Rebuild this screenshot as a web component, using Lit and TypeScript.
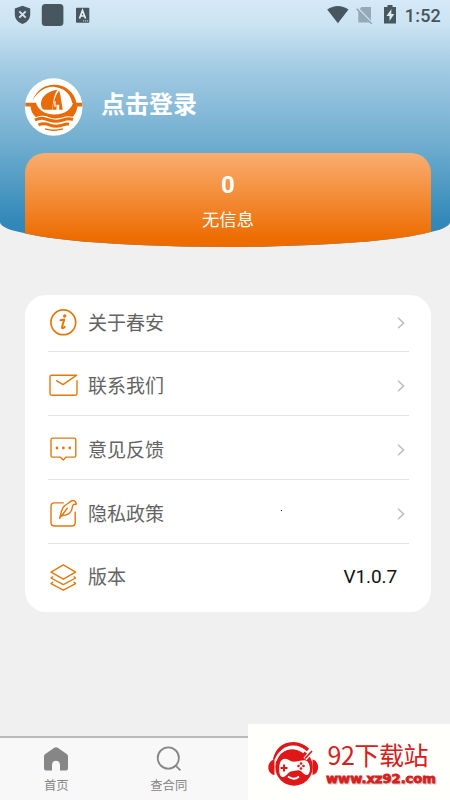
import { LitElement, html, css, svg } from "lit";
import { customElement, property } from "lit/decorators.js";

const icons: Record<string, unknown> = {
  info: svg`<circle cx="15.300" cy="15.300" r="12.400" stroke-width="1.700"/>
    <path d="M12.500 13.300l3.700-.8-2.200 7.800c-.3 1.300 1 1.200 2.700-.4" stroke-width="2"/>
    <circle cx="16.700" cy="9" r="1.700" fill="#e2790f" stroke="none"/>`,
  mail: svg`<path d="M29 10.600v12.900c0 1.100-.6 1.700-1.700 1.700H3.700C2.600 25.200 2 24.600 2 23.500V6.900C2 5.800 2.600 5.200 3.700 5.200H28.700L15 14.600 8.500 10.700"/>`,
  chat: svg`<path d="M4.600 4.100h21.600c1 0 1.600.6 1.600 1.600v15.800c0 1-.6 1.600-1.600 1.600h-8l-3 3-3-3H4.600c-1 0-1.600-.6-1.600-1.600V5.700c0-1 .6-1.600 1.600-1.600z"/>
    <g fill="#e2790f" stroke="none"><circle cx="9" cy="14" r="1.400"/><circle cx="15.400" cy="14" r="1.400"/><circle cx="21.800" cy="14" r="1.400"/></g>`,
  quill: svg`<path d="M15.200 4.900H6.500C4.200 4.900 3 6.100 3 8.400v16.100C3 26.800 4.200 28 6.500 28h17.200c2.300 0 3.500-1.200 3.500-3.500V14.200"/>
    <path d="M11.600 20.200L19.300 10.300M11.600 20.200C13 16 13.200 12 15.500 9 17.500 6.300 20 6 21.500 4.300c2-2.200 4.200-2 5.700-.7 1 .9 1.200 1.900.8 2.900-2.500-.9-3.700.6-3.800 3.200-.4 4.600-4.400 7.500-10.300 8"/>`,
  layers: svg`<path d="M15.300 2.900l12.300 7.200-12.300 7.100L3 10.100z"/>
    <path d="M4.600 14.800L3 16l12.300 6.700L27.600 16 26 14.800M4.600 20.300L3 21.600l12.300 6.600 12.300-6.600-1.600-1.300"/>`,
};

@customElement("menu-row")
class MenuRow extends LitElement {
  @property() icon = "";
  @property() label = "";
  @property() value = "";

  static styles = css`
    :host { display: flex; align-items: center; box-sizing: border-box; }
    .icon { width: 31px; height: 31px; fill: none; stroke: #e2790f; stroke-width: 1.4; stroke-linejoin: round; stroke-linecap: round; flex: none; }
    .label { flex: 1; margin-left: 9px; padding-top: 2px; font-size: 19px; line-height: 28px; color: #636363; }
    .value { margin-right: 12px; font: 19px/28px Roboto, sans-serif; letter-spacing: -.1px; color: #111; }
    .arrow { width: 8px; height: 12px; margin-right: 4px; fill: none; stroke: #bcbcbc; stroke-width: 1.5; }
  `;

  render() {
    return html`
      <svg class="icon" viewBox="0 0 31 31">${icons[this.icon]}</svg>
      <span class="label">${this.label}</span>
      ${this.value
        ? html`<span class="value">${this.value}</span>`
        : html`<svg class="arrow" viewBox="0 0 8 12"><path d="M1 .8L6.600 6 1 11.200"/></svg>`}
    `;
  }
}

@customElement("app-root")
class AppRoot extends LitElement {
  static styles = css`
    :host {
      display: flex; flex-direction: column; position: relative; width: 450px; height: 800px;
      overflow: hidden; background: #f0f0f0;
      font-family: Roboto, "Noto Sans CJK SC", sans-serif;
    }
    svg { display: block; flex: none; }
    .header {
      height: 247px; flex: none; overflow: hidden; display: flex; flex-direction: column;
      border-radius: 0 0 50% 50% / 0 0 25px 25px;
      background: linear-gradient(#d5e9f7 0, #cbe3f3 25px, #a5cce4 65px, #6fadcf 145px, #3389b9 220px, #2c84b5 247px);
    }
    .status { height: 30px; display: flex; justify-content: space-between; }
    .clock { font: 500 18px/32px Roboto, sans-serif; letter-spacing: .2px; fill: #46545c; }
    .user { display: flex; align-items: center; gap: 18px; margin: 48px 0 0 24px; height: 58px; }
    .login { font-size: 24px; line-height: 36px; font-weight: 700; color: #fff; margin-top: -4px; }
    .summary {
      margin: 17px 19px 0 25px; flex: 1; border-radius: 20px 20px 0 0; color: #fff;
      background: linear-gradient(#faad70, #ec6c00 92%); text-align: center;
    }
    .count { font-size: 24px; line-height: 28px; font-weight: 700; margin-top: 18px; }
    .caption { font-size: 17.3px; line-height: 26px; margin-top: 8px; }
    .menu {
      margin: 48px 19px 0 25px; height: 317px; flex: none; box-sizing: border-box; padding: 0 22px 0 23px;
      border-radius: 21px; background: #fff;
    }
    .menu menu-row { height: 64px; padding-top: 4px; border-bottom: 1px solid #e2e2e2; }
    .menu menu-row:first-child { height: 57px; padding: 0 0 1px; }
    .menu menu-row:last-child { height: 66px; padding: 0; border: 0; }
    .speck { position: absolute; left: 281px; top: 510px; width: 1px; height: 1px; background: #222; }
    .tabs {
      margin-top: auto; height: 64px; box-sizing: border-box; display: flex; background: #f8f8f8;
      border-top: 2px solid #bababa;
    }
    .tab { width: 112.5px; display: flex; flex-direction: column; align-items: center; padding-top: 8px; box-sizing: border-box; }
    .tab span { font-size: 12.3px; line-height: 18px; margin-top: 4px; color: #858585; }
    .mark { position: absolute; right: 0; bottom: 0; width: 202px; height: 76px; background: #fffffc; }
    .site { font: 25px "Noto Sans CJK SC", sans-serif; fill: #d7201c; }
    .url { font: 700 12px "DejaVu Sans", sans-serif; fill: #d7201c; stroke: #d7201c; stroke-width: .8; }
    .shade { fill: #ccc; stroke: #ccc; }
  `;

  render() {
    return html`
      <div class="header">
        <div class="status">
          <svg width="100" height="30" fill="#48575f">
            <path d="M22.500 5.800l7.700 2.800v5.600c0 4.500-3.100 8.100-7.700 9.800-4.600-1.700-7.700-5.300-7.700-9.800V8.600z"/>
            <path d="M19.300 11.300l6.400 6.400m0-6.400l-6.400 6.400" stroke="#d0e5f3" stroke-width="1.900"/>
            <rect x="41.800" y="4" width="21.600" height="22" rx="3.500"/>
            <rect x="76" y="7.700" width="13.300" height="15" rx=".8"/>
            <path d="M79.500 18.500l3-8 3 8m-5-2.500h4" stroke="#e5f1f8" stroke-width="1.700" fill="none"/>
            <path d="M83 20.900h5.200" stroke="#d0e5f3" stroke-dasharray="1.200 .8"/>
          </svg>
          <svg width="130" height="30">
            <path d="M7.200 9.500c6.500-4.700 14.800-4.700 21.300 0L17.900 23.300z" fill="#48575f"/>
            <path d="M41.500 7h9.500v15.500H38.300V11z" fill="#95a9b6"/>
            <path d="M37 7.800l15.600 16" stroke="#c9dfed" stroke-width="2.500"/>
            <path d="M36.600 8.700l15 15" stroke="#8fa3af" stroke-width="1.300"/>
            <path d="M67.500 5h5v2H76v16.500H64V7h3.500z" fill="#48575f"/>
            <path d="M71.500 9l-5 7h3v5l4.700-7h-3z" fill="#dcecf6"/>
            <text class="clock" x="84.800" y="22">1:52</text>
          </svg>
        </div>
        <div class="user">
          <svg width="59" height="58" viewBox="0 0 59 58">
            <circle cx="29.700" cy="29" r="28.800" fill="#fff"/>
            <path d="M1.300 24.700H58.100v3.800H53.500c-.5 3.800-2 7-4.500 10.200-4-.8-6.500-.8-9.500.4-5.500 2-10 1.800-15-.1-4-1.500-8-1.600-12.500.3-3.500-3-5-6.500-5.500-10.800H1.300z" fill="#e96b08"/>
            <ellipse cx="30.500" cy="22.500" rx="18.800" ry="14" fill="#fff"/>
            <g fill="#e96b08">
              <path d="M8.500 22.500C13 11 22 6.300 31.500 6.800 42 7.400 50.500 14.500 52.500 25h-4.300C46.500 15.500 40 10.200 31 9 22 8 14.500 13 8.500 22.500z"/>
              <path d="M33.500 11.800C25 12.500 17.500 18 17 25c-.2 3.500.8 5.500 3 6.700h8.500C29 25 29.500 17.500 33.500 11.800z"/>
              <path d="M35.200 12.500c1.800 5.700 2.200 12.700 3.600 19.200h-3.600v-5h-2.700v5h-3.700C29.200 25 31 17.500 35.200 12.500z"/>
            </g>
            <path d="M31 23v6" stroke="#fff" stroke-width="1.200"/>
            <g fill="none" stroke="#e96b08" stroke-width="3">
              <path d="M11 42c6-3 9-1.700 14 0 5.500 1.800 11 1.300 15.500-.5 3-1.200 5.500-1 8.500 0"/>
              <path d="M14.500 47c4-2 7.500-1.300 11.500.1 5 1.800 9.500 1.300 14-.5 2.200-.8 3.500-.8 5-.3"/>
            </g>
            <path d="M21 50.900q8.500 2.700 18 0" fill="none" stroke="#e96b08" stroke-width="1.500"/>
          </svg>
          <span class="login">点击登录</span>
        </div>
        <div class="summary">
          <div class="count">0</div>
          <div class="caption">无信息</div>
        </div>
      </div>

      <div class="menu">
        <menu-row icon="info" label="关于春安"></menu-row>
        <menu-row icon="mail" label="联系我们"></menu-row>
        <menu-row icon="chat" label="意见反馈"></menu-row>
        <menu-row icon="quill" label="隐私政策"></menu-row>
        <menu-row icon="layers" label="版本" value="V1.0.7"></menu-row>
      </div>
      <i class="speck"></i>

      <div class="tabs">
        <div class="tab">
          <svg width="26" height="27" viewBox="0 0 26 27">
            <path fill="#868686" d="M11.300 1.700Q13 .6 14.700 1.700l9 6.200q1.300.9 1.300 2.400v12.200q0 2-2 2h-6v-5.700c0-5.300-8-5.300-8 0v5.700H3q-2 0-2-2V10.300q0-1.500 1.300-2.400z"/>
          </svg>
          <span>首页</span>
        </div>
        <div class="tab">
          <svg width="26" height="27" viewBox="0 0 26 27" fill="none" stroke="#868686" stroke-width="1.800">
            <circle cx="12.300" cy="12" r="10.600"/><path d="M19.500 19.300l4.900 5"/>
          </svg>
          <span>查合同</span>
        </div>
      </div>

      <div class="mark">
        <svg width="202" height="76">
          <g fill="#df1719">
            <circle cx="46" cy="43" r="18.700"/>
            <path d="M26.500 35.500c-8 1.500-8.500 14 0 15.500zM64.500 35.500c7.500 1.500 7.500 14 0 15.500z"/>
            <path d="M26.500 36C31 16.500 50 16.500 60 26" fill="none" stroke="#df1719" stroke-width="3.500"/>
          </g>
          <path d="M27.500 36.500c5-13.500 18-15.500 28.500-8.300" fill="none" stroke="#fffffc" stroke-width="2.300"/>
          <path d="M57 35l6.500-7.500" stroke="#fffffc" stroke-width="4"/>
          <path d="M57 34.500l7-7.500" stroke="#df1719" stroke-width="1.700"/>
          <path d="M32 39c2-6 7-5 11-1.700 6 1.600 13-3.300 16.500.2 3.500 3.500 3.200 13-.5 13.500-3.500.3-5-5-9-4.800l-6 1c-4 .4-6 6.300-9.500 5.800-4-.6-3.800-10-2.500-14z" fill="#fffffc"/>
          <path d="M36 40.500v7m-3.500-3.500h7" stroke="#df1719" stroke-width="2"/>
          <g fill="#df1719"><circle cx="53" cy="39.500" r="1.300"/><circle cx="53" cy="44.500" r="1.300"/><circle cx="50.500" cy="42" r="1.300"/><circle cx="55.500" cy="42" r="1.300"/></g>
          <path d="M40 52.500q6 4.500 11 0" fill="none" stroke="#fffffc" stroke-width="1.800"/>
          <text class="site" x="79.500" y="40.500" textLength="101">92下载站</text>
          <text class="url shade" x="79" y="60" textLength="110" lengthAdjust="spacingAndGlyphs" aria-hidden="true">www.xz92.com</text>
          <text class="url" x="78" y="59" textLength="110" lengthAdjust="spacingAndGlyphs">www.xz92.com</text>
        </svg>
      </div>
    `;
  }
}
